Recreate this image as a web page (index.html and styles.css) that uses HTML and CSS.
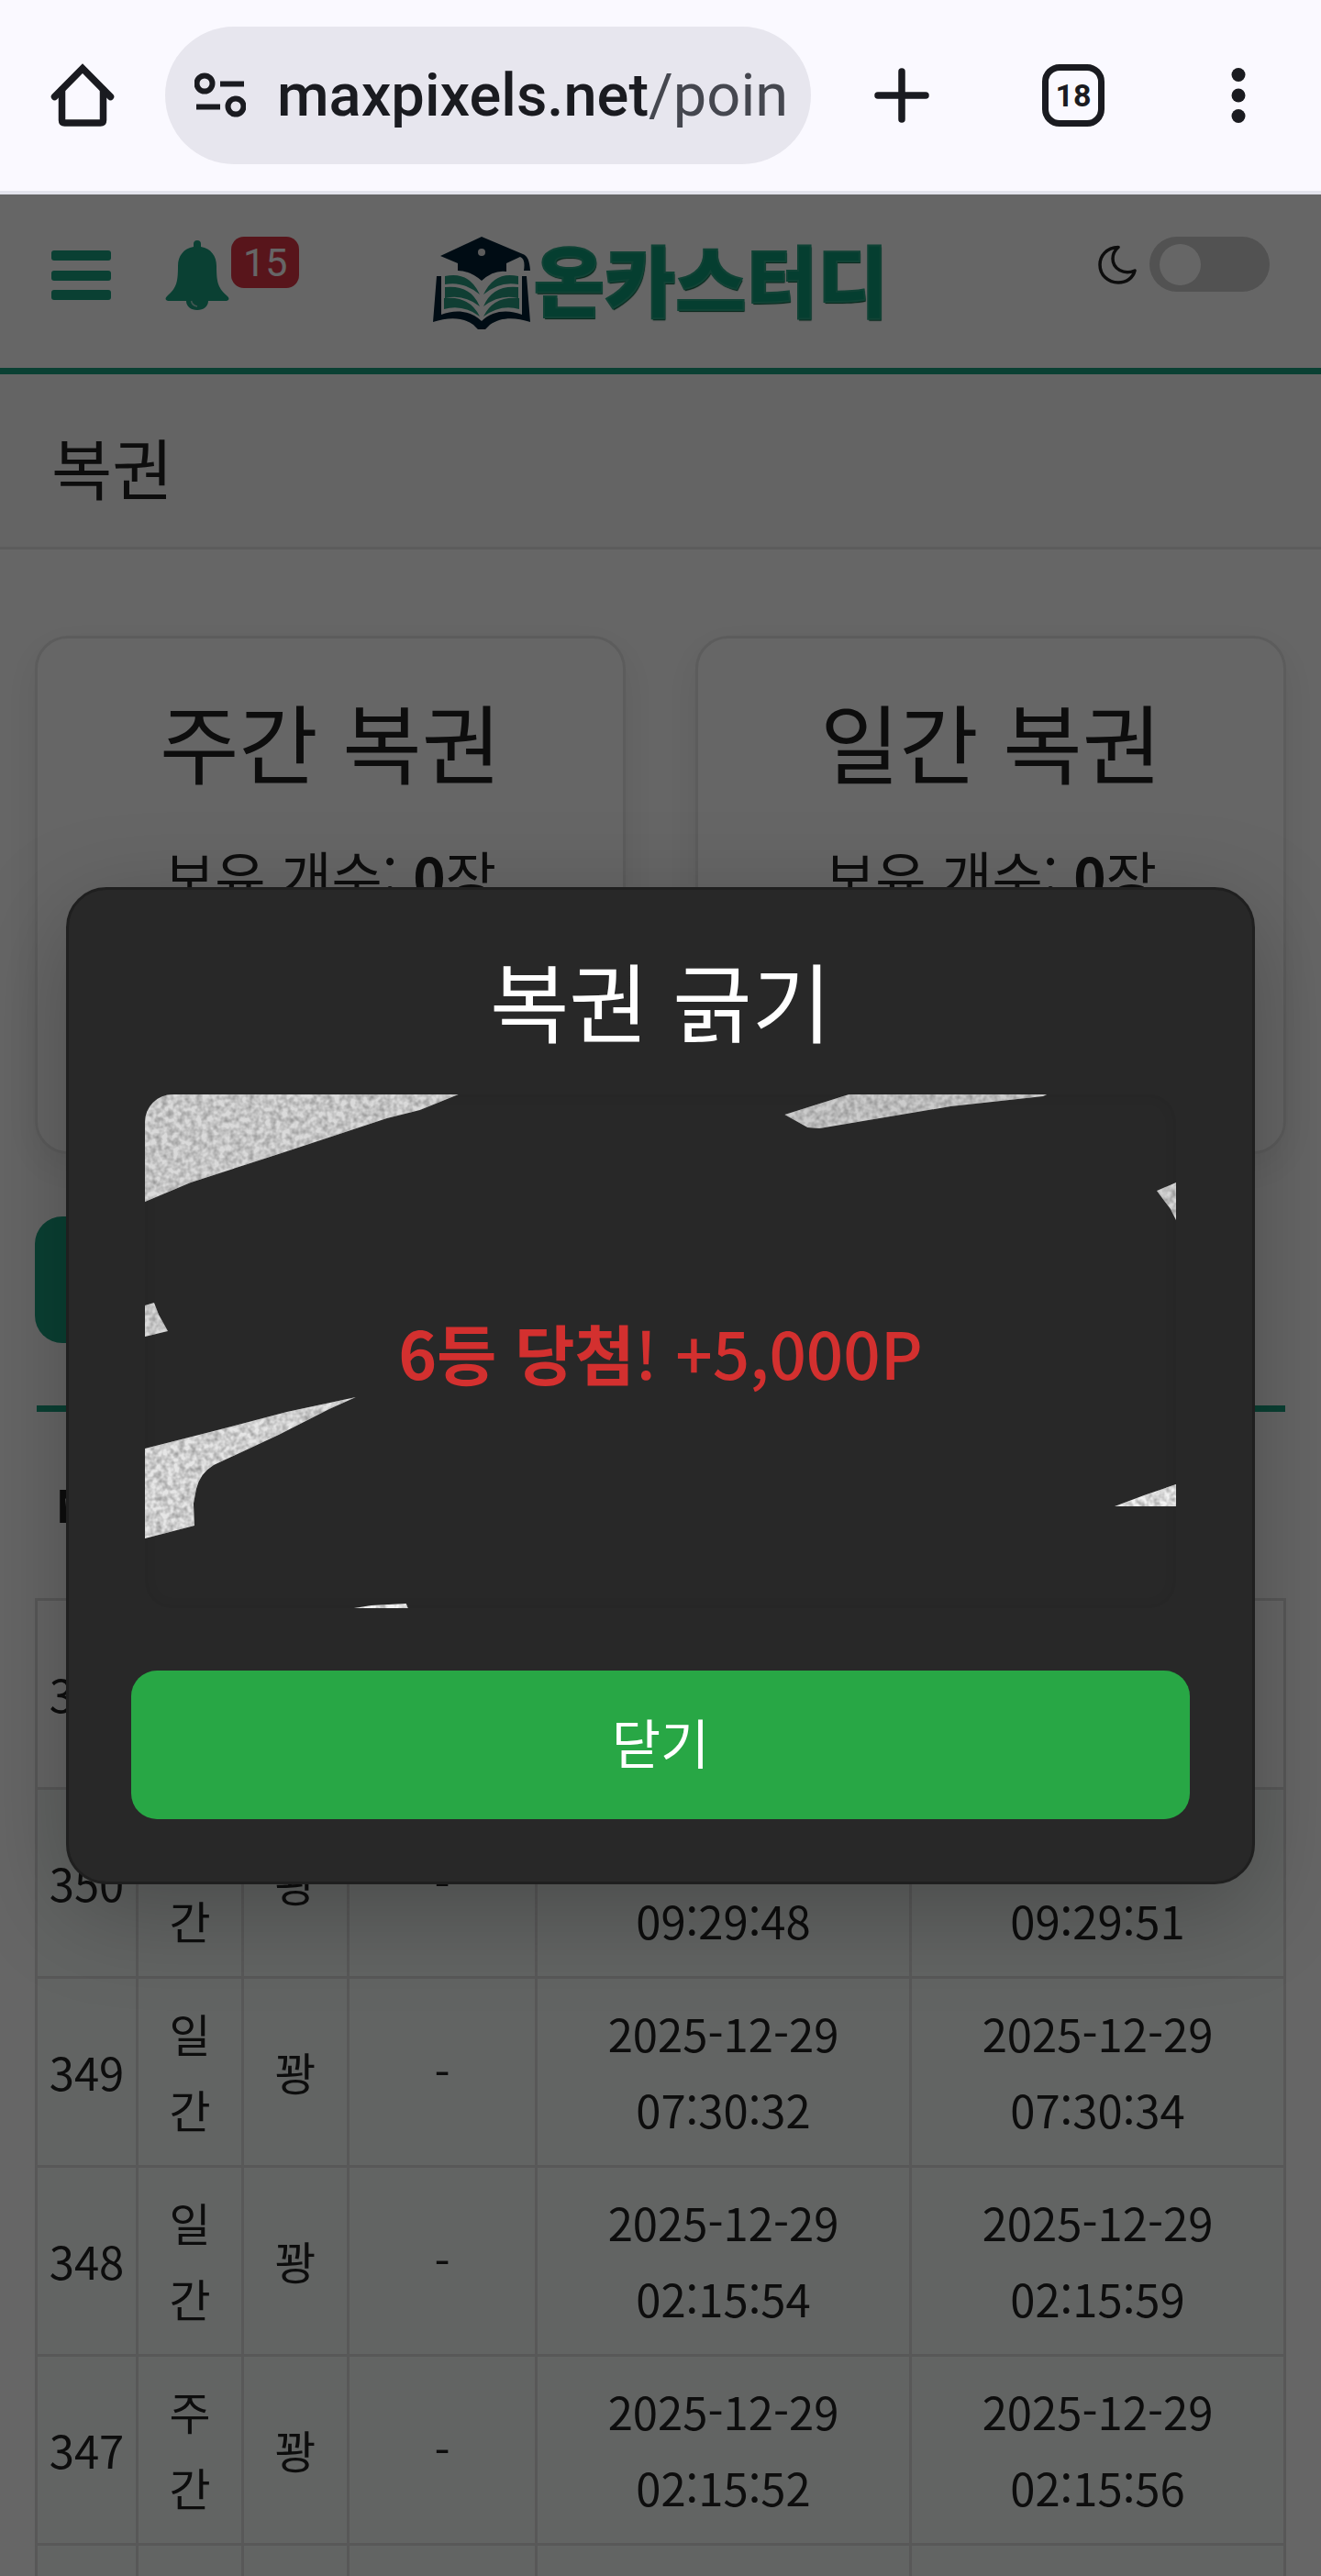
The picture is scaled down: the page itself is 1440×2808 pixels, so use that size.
FILE: index.html
```html
<!DOCTYPE html>
<html lang="ko">
<head>
<meta charset="utf-8">
<meta name="viewport" content="width=device-width, initial-scale=1">
<title>복권</title>
<link rel="stylesheet" href="styles.css">
</head>
<body>
<nav class="browser-bar" aria-label="Browser">
  <button class="icon-button" type="button" aria-label="Home">
    <svg width="70" height="70" viewBox="0 0 70 70" fill="none" stroke="#1a1b20" stroke-width="7.5" stroke-linecap="round" stroke-linejoin="round"><path d="M4.500 36.500 35 5.500l30.500 31" stroke-linejoin="miter"/><path d="M12.500 29v33q0 3 3 3h39q3 0 3-3V29"/></svg>
  </button>
  <div class="address">
    <svg class="tune" width="56" height="50" viewBox="0 0 56 50" fill="none" stroke="#1a1b20" stroke-width="6"><circle cx="11" cy="12" r="8.500"/><path d="M28 12.500h26M2 37.500h26"/><circle cx="45" cy="37" r="8.500"/></svg>
    <span class="url"><b>maxpixels.net</b>/point</span>
  </div>
  <button class="icon-button" type="button" aria-label="New tab">
    <svg width="60" height="60" viewBox="0 0 60 60" fill="none" stroke="#1a1b20" stroke-width="7.500" stroke-linecap="round"><path d="M30 4v52M4 30h52"/></svg>
  </button>
  <button class="tabs-button" type="button" aria-label="Tabs">18</button>
  <button class="icon-button" type="button" aria-label="Menu">
    <svg width="16" height="60" viewBox="0 0 16 60" fill="#1a1b20"><circle cx="8" cy="7.500" r="7.500"/><circle cx="8" cy="30" r="7.500"/><circle cx="8" cy="52.500" r="7.500"/></svg>
  </button>
</nav>

<div class="site">
  <header class="site-header">
    <div class="header-left">
      <button class="icon-button" type="button" aria-label="메뉴">
        <svg width="66" height="54" viewBox="0 0 66 54" fill="#1ba080"><rect x="0" y="0" width="65" height="11" rx="3"/><rect x="0" y="22" width="65" height="11" rx="3"/><rect x="0" y="43" width="65" height="11" rx="3"/></svg>
      </button>
      <button class="icon-button alerts" type="button" aria-label="알림">
        <svg width="70" height="76" viewBox="0 0 70 76" fill="#1ba080"><path d="M31 7V4a4 4 0 0 1 8 0v3c11 2 17 10 17 21 0 19 2 24 12 33 3 3 1 5-3 5H47c0 6-5 10-12 10s-12-4-12-10H5c-4 0-6-2-3-5 10-9 12-14 12-33C14 17 20 9 31 7z"/><path d="M28.500 66q1 5 6.500 6" fill="none" stroke="#fff" stroke-opacity=".6" stroke-width="1.500"/></svg>
        <span class="badge">15</span>
      </button>
    </div>
    <a class="logo" href="#">
      <svg width="106" height="101" viewBox="0 0 106 101">
        <path d="M4 43h5v42c15-6 32-5 44 7 12-12 29-13 44-7V43h5l4 50c-16-5-31-6-44 3l-5 5h-8l-5-5c-13-9-28-8-44-3z" fill="#012033"/>
        <g fill="#2a9b80"><path d="M13 43q26-6 38 20-18-15-38-11zM13 55q28-3 38 21-18-14-38-9zM12 67q28-3 39 20-19-14-39-8zM93 43q-26-6-38 20 18-15 38-11zM93 55q-28-3-38 21 18-14 38-9zM94 67q-28-3-39 20 19-14 39-8z"/></g>
        <path d="M53 0 98 19q7 2 8 18h-7q2-13-4-15L80 29v9q-14-2-27 10Q40 37 27 37v-8L8 21z" fill="#012033"/>
        <circle cx="53" cy="17" r="4" fill="#e6e6e6"/>
      </svg>
      <span class="logo-name">온카스터디</span>
    </a>
    <label class="theme">
      <svg width="42" height="43" viewBox="0 0 42 43" fill="none" stroke="#222" stroke-width="3.500" stroke-linejoin="round"><path d="M22 2.500C9 3 2 12 2 21.500 2 33 11 41 22 41c9 0 16-5 18-13-12 5-24-2-24-13 0-5 2-9 6-12.500z"/></svg>
      <input class="switch" type="checkbox" role="switch" aria-label="다크 모드">
    </label>
  </header>

  <section class="page-title"><h1>복권</h1></section>

  <main class="content">
    <div class="cards">
      <section class="card">
        <h2>주간 복권</h2>
        <p>보유 개수: <b>0</b>장</p>
      </section>
      <section class="card">
        <h2>일간 복권</h2>
        <p>보유 개수: <b>0</b>장</p>
      </section>
    </div>
    <button class="primary" type="button" aria-label="목록"></button>
    <table class="history">
      <colgroup><col class="c-no"><col class="c-kind"><col class="c-kind"><col class="c-point"><col class="c-date"><col class="c-date"></colgroup>
      <thead><tr><th>No</th><th></th><th></th><th></th><th></th><th></th></tr></thead>
      <tbody>
        <tr class="latest"><td>351</td><td></td><td></td><td></td><td></td><td></td></tr>
        <tr><td>350</td><td>일간</td><td>꽝</td><td>-</td><td>2025-12-29 09:29:48</td><td>2025-12-29 09:29:51</td></tr>
        <tr><td>349</td><td>일간</td><td>꽝</td><td>-</td><td>2025-12-29 07:30:32</td><td>2025-12-29 07:30:34</td></tr>
        <tr><td>348</td><td>일간</td><td>꽝</td><td>-</td><td>2025-12-29 02:15:54</td><td>2025-12-29 02:15:59</td></tr>
        <tr><td>347</td><td>주간</td><td>꽝</td><td>-</td><td>2025-12-29 02:15:52</td><td>2025-12-29 02:15:56</td></tr>
        <tr><td></td><td></td><td></td><td></td><td></td><td></td></tr>
      </tbody>
    </table>
  </main>

  <div class="overlay">
    <div class="modal" role="dialog" aria-modal="true" aria-labelledby="modal-title">
      <h2 id="modal-title">복권 긁기</h2>
      <div class="ticket">
        <svg class="foil" viewBox="0 0 1125 560" preserveAspectRatio="none" aria-hidden="true">
          <defs>
            <filter id="grain" x="0" y="0" width="100%" height="100%" color-interpolation-filters="sRGB">
              <feTurbulence type="fractalNoise" baseFrequency=".16" numOctaves="2" seed="4"/>
              <feColorMatrix values="0 0 0 0 .5  0 0 0 0 .5  0 0 0 0 .5  1.300 0 0 0 -.42"/>
              <feComposite in2="SourceGraphic" operator="in" result="noise"/>
              <feMerge><feMergeNode in="SourceGraphic"/><feMergeNode in="noise"/></feMerge>
            </filter>
          </defs>
          <g filter="url(#grain)">
            <path fill="#dadada" d="M0 0H342L300 17 264 26 155 62 50 96 0 117z"/>
            <path fill="#cccccc" d="M768 0 698 22 723 36 736 37 879 13 980 2 984 0z"/>
            <path fill="#d6d6d6" d="M1125 96 1104 105 1119 125 1125 137z"/>
            <path fill="#dadada" d="M0 230 10 227 15 240 25 258 0 264z"/>
            <path fill="#e6e6e6" d="M0 386 71 368 155 346 230 330 201 343 146 371 75 404Q60 413 56 430L53 446 54 470 0 484z"/>
            <path fill="#f2f2f2" d="M1125 425 1090 437 1058 449H1125z"/>
            <path fill="#f2f2f2" d="M228 560 247 557 285 555 287 560z"/>
          </g>
        </svg>
        <p class="prize"><b>6등 당첨</b>! +5,000P</p>
      </div>
      <button class="close" type="button">닫기</button>
    </div>
  </div>
</div>
</body>
</html>
```
FILE: styles.css
```css
* { box-sizing: border-box; }

body {
  margin: 0;
  height: 100vh;
  display: flex;
  flex-direction: column;
  font-family: "Noto Sans CJK KR", sans-serif;
  font-size: 49px;
  color: #222;
}

h1, h2, p { margin: 0; font-weight: 400; }
button { font: inherit; border: 0; padding: 0; background: none; cursor: pointer; }
svg { display: block; flex: none; }
.icon-button { display: flex; align-items: center; }

/* Browser bar */
.browser-bar {
  flex: none;
  display: flex;
  align-items: center;
  height: 212px;
  padding: 0 82px 0 55px;
  background: #faf9ff;
  border-bottom: 4px solid #e3e3ec;
  font-family: Roboto, sans-serif;
}
.address {
  flex: 1;
  min-width: 0;
  display: flex;
  align-items: center;
  gap: 34px;
  height: 150px;
  margin: 0 69px 0 55px;
  padding: 0 28px 0 32px;
  border-radius: 75px;
  background: #e7e6ee;
}
.url {
  flex: 1;
  overflow: hidden;
  white-space: nowrap;
  font-size: 65px;
  line-height: 90px;
  color: #45474f;
}
.url b { font-weight: 500; color: #1a1b20; }
.tabs-button {
  width: 68px;
  height: 68px;
  margin: 0 138px 0 123px;
  border: 7px solid #1a1b20;
  border-radius: 19px;
  font-size: 34px;
  font-weight: 700;
  color: #1a1b20;
}

/* Site */
.site {
  position: relative;
  flex: 1;
  min-height: 0;
  overflow: hidden;
  background: #fff;
}
.site-header {
  display: grid;
  grid-template-columns: 1fr auto 1fr;
  align-items: start;
  height: 196px;
  padding: 46px 56px 0;
  border-bottom: 7px solid #1ba080;
}
.header-left {
  display: flex;
  align-items: center;
  gap: 58px;
  height: 84px;
}
.alerts { gap: 2px; }
.badge {
  align-self: flex-start;
  margin-top: -4px;
  padding: 0 13px;
  border-radius: 14px;
  background: #dc3545;
  color: #fff;
  font: 43px/56px Roboto, sans-serif;
}
.logo {
  display: flex;
  align-items: center;
  gap: 4px;
  height: 101px;
  color: #0e9c78;
  text-decoration: none;
}
.logo-name {
  padding-bottom: 12px;
  font-size: 84px;
  font-weight: 900;
  line-height: 101px;
  -webkit-text-stroke: 2px #2aa585;
  text-shadow: 1px 2px 1px #0a5a3c;
}
.theme {
  justify-self: end;
  display: flex;
  align-items: center;
  gap: 14px;
}
.switch {
  appearance: none;
  width: 131px;
  height: 60px;
  margin: 0;
  padding: 8px 11px;
  border-radius: 30px;
  background: #ccc;
}
.switch::before {
  content: "";
  display: block;
  width: 45px;
  height: 45px;
  border-radius: 50%;
  background: #fff;
}

.page-title {
  padding: 52px 56px 40px;
  background: #fafafa;
  border-bottom: 3px solid #e6e6e6;
}
.page-title h1 { font-size: 72px; line-height: 96px; }

.content { padding: 94px 38px 0; }
.cards {
  display: grid;
  grid-template-columns: 1fr 1fr;
  gap: 76px;
}
.card {
  height: 565px;
  padding: 56px 40px;
  border: 3px solid #e6e6e6;
  border-radius: 36px;
  background: #fff;
  box-shadow: 0 14px 42px rgba(0, 0, 0, .08);
  text-align: center;
}
.card h2 { font-size: 94px; line-height: 110px; }
.card p { margin-top: 46px; font-size: 60px; line-height: 90px; }
.primary {
  display: block;
  width: 340px;
  height: 138px;
  margin: 68px 0;
  border-radius: 30px;
  background: #1ba080;
}

.history {
  width: 100%;
  table-layout: fixed;
  border-collapse: collapse;
  text-align: center;
  line-height: 83px;
}
.c-no { width: 110px; }
.c-kind { width: 115px; }
.c-point { width: 205px; }
.history thead { border-top: 7px solid #1ba080; }
.history th { height: 208px; padding: 0 10px 4px; font-weight: 700; }
.history td {
  height: 206px;
  padding: 17px 10px 20px;
  border: 3px solid #dcdcdc;
  background: #f5faf8;
}
.history td:nth-child(2) { padding-left: 32px; padding-right: 32px; word-break: break-all; }
.history td:nth-child(n+5) { padding-left: 60px; padding-right: 60px; }
.history .latest td { background: #fff; }

/* Scratch dialog */
.overlay {
  position: absolute;
  inset: 0;
  display: flex;
  align-items: center;
  justify-content: center;
  background: rgba(0, 0, 0, .6);
}
.modal {
  width: 90%;
  padding: 64px 68px 68px;
  border: 3px solid #1f1f1f;
  border-radius: 44px;
  background: #282828;
  box-shadow: 0 28px 105px rgba(0, 0, 0, .25);
  color: #fff;
  text-align: center;
}
.modal h2 { font-size: 94px; line-height: 110px; }
.ticket {
  display: grid;
  place-items: center;
  margin: 49px 15px 68px;
  border-radius: 30px;
  overflow: hidden;
  box-shadow: inset 0 0 14px rgba(0, 0, 0, .08);
}
.foil { grid-area: 1 / 1; width: 100%; height: 560px; }
.prize {
  grid-area: 1 / 1;
  position: relative;
  font-size: 71px;
  line-height: 100px;
  font-weight: 500;
  color: #d3302f;
}
.close {
  display: block;
  width: 100%;
  height: 162px;
  padding-bottom: 8px;
  border-radius: 28px;
  background: #28a745;
  color: #fff;
  font-size: 58px;
}
```
